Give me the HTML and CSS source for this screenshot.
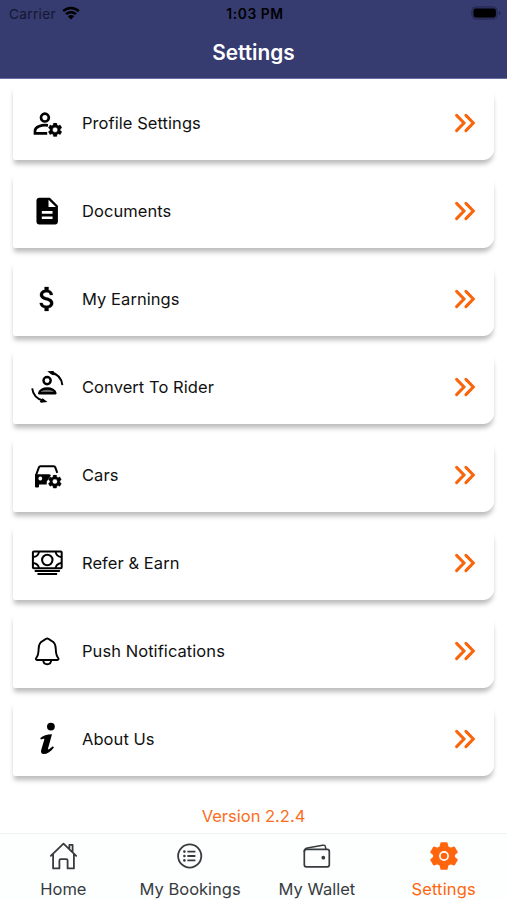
FILE: index.html
```html
<!DOCTYPE html>
<html lang="en">
<head>
<meta charset="utf-8">
<title>Settings</title>
<link rel="stylesheet" href="styles.css">
</head>
<body>
<svg class="defs" aria-hidden="true">
  <symbol id="gear" viewBox="2 2 20 20"><path stroke="#000" stroke-width=".5" d="M19.14 12.94c.04-.3.06-.61.06-.94 0-.32-.02-.64-.07-.94l2.03-1.58c.18-.14.23-.41.12-.61l-1.92-3.32c-.12-.22-.37-.29-.59-.22l-2.39.96c-.5-.38-1.03-.7-1.62-.94L14.4 2.81c-.04-.24-.24-.41-.48-.41h-3.84c-.24 0-.43.17-.47.41L9.25 5.35c-.59.24-1.13.57-1.62.94l-2.39-.96c-.22-.08-.47 0-.59.22L2.74 8.87c-.12.21-.08.47.12.61l2.03 1.58c-.05.3-.09.63-.09.94s.02.64.07.94l-2.03 1.58c-.18.14-.23.41-.12.61l1.92 3.32c.12.22.37.29.59.22l2.39-.96c.5.38 1.03.7 1.62.94l.36 2.54c.05.24.24.41.48.41h3.84c.24 0 .44-.17.47-.41l.36-2.54c.59-.24 1.13-.56 1.62-.94l2.39.96c.22.08.47 0 .59-.22l1.92-3.32c.12-.22.07-.47-.12-.61zM12 15.6a3.6 3.6 0 1 1 0-7.2 3.6 3.6 0 0 1 0 7.2z"/></symbol>
  <symbol id="chevrons" viewBox="0 0 22 20"><path d="M2.600 2.400 10 10l-7.400 7.600M11.900 2.400 19.300 10l-7.400 7.600" fill="none" stroke="currentColor" stroke-width="3" stroke-linecap="round"/></symbol>
</svg>
<header class="header">
  <div class="status">
    <div class="carrier">Carrier
      <svg class="wifi" viewBox="0 0 18 14"><path d="M1.2 5.2a11.2 11.2 0 0 1 15.6 0M4 8.2a7.2 7.2 0 0 1 10 0" fill="none" stroke="#000" stroke-width="2.5"/><path d="M5.8 10.2a4.6 4.6 0 0 1 6.4 0L9 13.6z"/></svg>
    </div>
    <div class="time">1:03 PM</div>
    <svg class="battery" viewBox="0 0 30 14"><rect x=".8" y=".8" width="25.6" height="12.4" rx="4" fill="#2c3160" stroke="#282c56"/><rect x="2.5" y="2.6" width="22.4" height="8.8" rx="2.3"/><path d="M28 5v4q1.6-.7 1.6-2T28 5z" fill="#232648"/></svg>
  </div>
  <h1 class="title">Settings</h1>
</header>
<main class="list">
  <div class="card">
    <svg class="icon" viewBox="0 0 40 40"><circle cx="17.900" cy="14.600" r="3.900" fill="none" stroke="#000" stroke-width="2.700"/><path d="M21 22.300c-6.300-1-13 1.600-13 5.400v2.600h12.200" fill="none" stroke="#000" stroke-width="2.700"/><use href="#gear" x="21" y="19.700" width="14.200" height="14.200"/></svg>
    <span class="label">Profile Settings</span><svg class="go"><use href="#chevrons"/></svg>
  </div>
  <div class="card">
    <svg class="icon" viewBox="0 0 40 40"><path transform="translate(4.100 4) scale(1.340)" d="M14 2H6c-1.100 0-2 .9-2 2v16c0 1.100.9 2 2 2h12c1.100 0 2-.9 2-2V8zm2 16H8v-2h8zm0-4H8v-2h8zm-3-5V3.500L18.500 9z"/></svg>
    <span class="label">Documents</span><svg class="go"><use href="#chevrons"/></svg>
  </div>
  <div class="card">
    <svg class="icon" viewBox="0 0 40 40"><path transform="translate(4.300 4) scale(1.330)" stroke="#000" stroke-width=".2" d="M11.800 10.900c-2.270-.59-3-1.200-3-2.150 0-1.090 1.010-1.850 2.700-1.850 1.780 0 2.440.85 2.500 2.100h2.210c-.07-1.720-1.120-3.300-3.210-3.810V3h-3v2.160c-1.940.42-3.500 1.680-3.500 3.610 0 2.310 1.910 3.460 4.700 4.130 2.500.6 3 1.480 3 2.410 0 .69-.49 1.790-2.700 1.790-2.060 0-2.870-.92-2.980-2.100h-2.200c.12 2.190 1.760 3.420 3.680 3.830V21h3v-2.150c1.950-.37 3.500-1.500 3.500-3.550 0-2.840-2.430-3.810-4.700-4.400z"/></svg>
    <span class="label">My Earnings</span><svg class="go"><use href="#chevrons"/></svg>
  </div>
  <div class="card">
    <svg class="icon" viewBox="0 0 40 40"><circle cx="20.100" cy="13.600" r="3.600" fill="none" stroke="#000" stroke-width="2.400"/><path d="M12.200 26.200c.4-6.200 15.800-6.200 16.200 0z" fill="#666" stroke="#000" stroke-width="2.400" stroke-linejoin="round"/><path d="M23.500 5.300c6.500 1.500 11.200 6 11.900 12.900M5.200 21.300c.7 6 5 10.700 11.200 12.400" fill="none" stroke="#000" stroke-width="1.900"/><path d="m20.200 4.200 6.300-.3 2.200 4.300-3.500-.2zM20.500 35l-6.700.8-1-1.600 2.800-3z"/></svg>
    <span class="label">Convert To Rider</span><svg class="go"><use href="#chevrons"/></svg>
  </div>
  <div class="card">
    <svg class="icon" viewBox="0 0 40 40"><path d="M8.900 20.500 11.900 12.400q.4-1.100 1.500-1.100h13.400q1.100 0 1.500 1.100l2 5.400" fill="none" stroke="#000" stroke-width="2"/><path fill-rule="evenodd" d="M8 19.300h14l2 .8-4.300 6.700v2.600H12v2q0 1-1 1H9q-1 0-1-1zM13.300 21.600a1.900 1.900 0 1 0 .01 0z"/><use href="#gear" x="21" y="19.700" width="13.800" height="13.800"/></svg>
    <span class="label">Cars</span><svg class="go"><use href="#chevrons"/></svg>
  </div>
  <div class="card">
    <svg class="icon" viewBox="0 0 40 40"><rect x="5.900" y="8.600" width="28.800" height="16.700" rx="1" fill="none" stroke="#000" stroke-width="2"/><circle cx="20.300" cy="17" r="5.200" fill="none" stroke="#000" stroke-width="2"/><path d="M6.300 14q5.200-.8 5.600-5M34.300 14q-5.200-.8-5.600-5M6.300 20q5.200.8 5.600 5M34.300 20q-5.200.8-5.600 5" fill="none" stroke="#000" stroke-width="1.900"/><path d="M7.700 28h25.200M10.500 31h19.600" stroke="#000" stroke-width="2"/></svg>
    <span class="label">Refer &amp; Earn</span><svg class="go"><use href="#chevrons"/></svg>
  </div>
  <div class="card">
    <svg class="icon" viewBox="0 0 40 40"><path d="M15.900 9.900c1.700-.6 2.200-2.400 4.300-2.400s2.600 1.800 4.300 2.400c3.300 1.300 4.200 4.700 4.300 8.300.1 5.500 1 7.100 2.400 8.800.8 1 .2 2-.9 2H10.100c-1.100 0-1.700-1-.9-2 1.400-1.700 2.300-3.300 2.400-8.800.1-3.600 1-7 4.300-8.300zM16.200 29.300c.3 5.300 7.700 5.300 8 0" fill="none" stroke="#000" stroke-width="1.900" stroke-linejoin="round"/></svg>
    <span class="label">Push Notifications</span><svg class="go"><use href="#chevrons"/></svg>
  </div>
  <div class="card">
    <svg class="icon" viewBox="0 0 40 40"><circle cx="23.900" cy="7.600" r="3.900"/><path d="M13.300 19c2.600-2.500 6.700-3.800 11.700-3.800l-3.900 14c-.3 1.200.3 1.500 1.200.9l3.600-2.900 1 1.200c-3 4-6.500 6.600-10.400 6.600-2.300 0-2.900-1.800-2.300-4l3.100-10.400c.3-1.200-.3-1.300-3.500-.2z"/></svg>
    <span class="label">About Us</span><svg class="go"><use href="#chevrons"/></svg>
  </div>
</main>
<div class="version">Version 2.2.4</div>
<nav class="tabs">
  <a class="tab"><svg class="tab-icon" viewBox="0 0 30 30"><path d="M2.800 14.800 15.500 2.700l12.700 12.100M5.100 13v14.400h6.300v-8q0-1.200 1.200-1.200h5.800q1.200 0 1.200 1.200v8h6.300V13M21.400 7.500V3.900h3.200v7" fill="none" stroke="currentColor" stroke-width="1.800" stroke-linejoin="round" stroke-linecap="round"/></svg><span>Home</span></a>
  <a class="tab"><svg class="tab-icon" viewBox="0 0 30 30"><circle cx="14.700" cy="15" r="11.600" fill="none" stroke="currentColor" stroke-width="1.800"/><path d="M12.400 10.600h8M12.400 15h8M12.400 19.400h8" stroke="currentColor" stroke-width="1.800"/><g fill="currentColor"><circle cx="9.400" cy="10.600" r="1.300"/><circle cx="9.400" cy="15" r="1.300"/><circle cx="9.400" cy="19.400" r="1.300"/></g></svg><span>My Bookings</span></a>
  <a class="tab"><svg class="tab-icon" viewBox="0 0 30 30"><rect x="2.300" y="8.400" width="25" height="17.400" rx="2" fill="none" stroke="currentColor" stroke-width="1.700"/><path d="M2.300 11c0-2.500.5-3.500 3-4l15.300-2.800q2.600-.4 2.800 1.600l.5 2.700" fill="none" stroke="currentColor" stroke-width="1.500"/><circle cx="21.300" cy="16.700" r="1.900" fill="currentColor"/></svg><span>My Wallet</span></a>
  <a class="tab active"><svg class="tab-icon" viewBox="0 0 30 30"><path fill="currentColor" stroke="currentColor" stroke-width="1.500" stroke-linejoin="round" d="m12.200 2-.9 3.800-2.800 1.600-3.700-1.100L2 11.200l2.800 2.600v2.400L2 18.800l2.800 4.900 3.700-1.100 2.800 1.600.9 3.800h5.600l.9-3.800 2.800-1.600 3.700 1.100 2.800-4.900-2.800-2.600v-2.400l2.800-2.600-2.800-4.900-3.700 1.100-2.800-1.600-.9-3.800z"/><circle cx="15" cy="15" r="4.100" fill="#ff650d" stroke="#fff" stroke-width="1.700"/></svg><span>Settings</span></a>
</nav>
</body>
</html>
```
FILE: styles.css
```css
* { box-sizing: border-box; }
body {
  margin: 0;
  width: 507px;
  height: 900px;
  overflow: hidden;
  display: flex;
  flex-direction: column;
  background: #fff;
  color: #111;
  font-family: Inter, "Liberation Sans", sans-serif;
}
.defs { position: absolute; width: 0; height: 0; }
.header { height: 79px; flex: none; background: #363b70; border-bottom: 1px solid #6a70a5; }
.status {
  display: grid;
  grid-template-columns: 1fr auto 1fr;
  align-items: center;
  height: 27px;
  padding: 0 6px 0 9px;
  color: #000;
}
.carrier { display: flex; align-items: center; gap: 6px; font-size: 13.600px; letter-spacing: .35px; color: #15172f; }
.wifi { width: 18px; height: 14px; margin-top: -2px; }
.time { font-size: 13.800px; font-weight: 600; letter-spacing: .6px; }
.battery { width: 30px; height: 14px; justify-self: end; margin-top: -1px; }
.title { margin: 0; text-align: center; color: #fff; font-size: 20.800px; font-weight: 600; line-height: 51px; }
.list { display: flex; flex-direction: column; gap: 14px; padding: 7px 13px 0; }
.card {
  display: flex;
  align-items: center;
  height: 74px;
  flex: none;
  padding: 0 18px 0 14px;
  background: #fff;
  border-radius: 2px 11px 11px 2px;
  box-shadow: 0 5px 5px -1px rgba(0, 0, 0, .27);
}
.icon { width: 40px; height: 40px; }
.label { flex: 1; margin: -1px 0 0 15px; font-size: 16.500px; letter-spacing: .06px; }
.go { width: 22px; height: 20px; color: #fa640a; }
.version { margin-top: 29px; text-align: center; color: #fb6d20; font-size: 16.500px; line-height: 22px; }
.tabs {
  margin-top: auto;
  height: 67px;
  flex: none;
  display: grid;
  grid-template-columns: repeat(4, 1fr);
  border-top: 1px solid #f0f0f0;
  background: #fdfefe;
}
.tab { display: flex; flex-direction: column; align-items: center; padding-top: 7px; color: #363c3e; font-size: 16.500px; white-space: nowrap; }
.tab span { margin-top: 7px; line-height: 22px; }
.tab-icon { width: 30px; height: 30px; }
.tab.active { color: #ff650d; }
.active span { letter-spacing: .15px; }
```
